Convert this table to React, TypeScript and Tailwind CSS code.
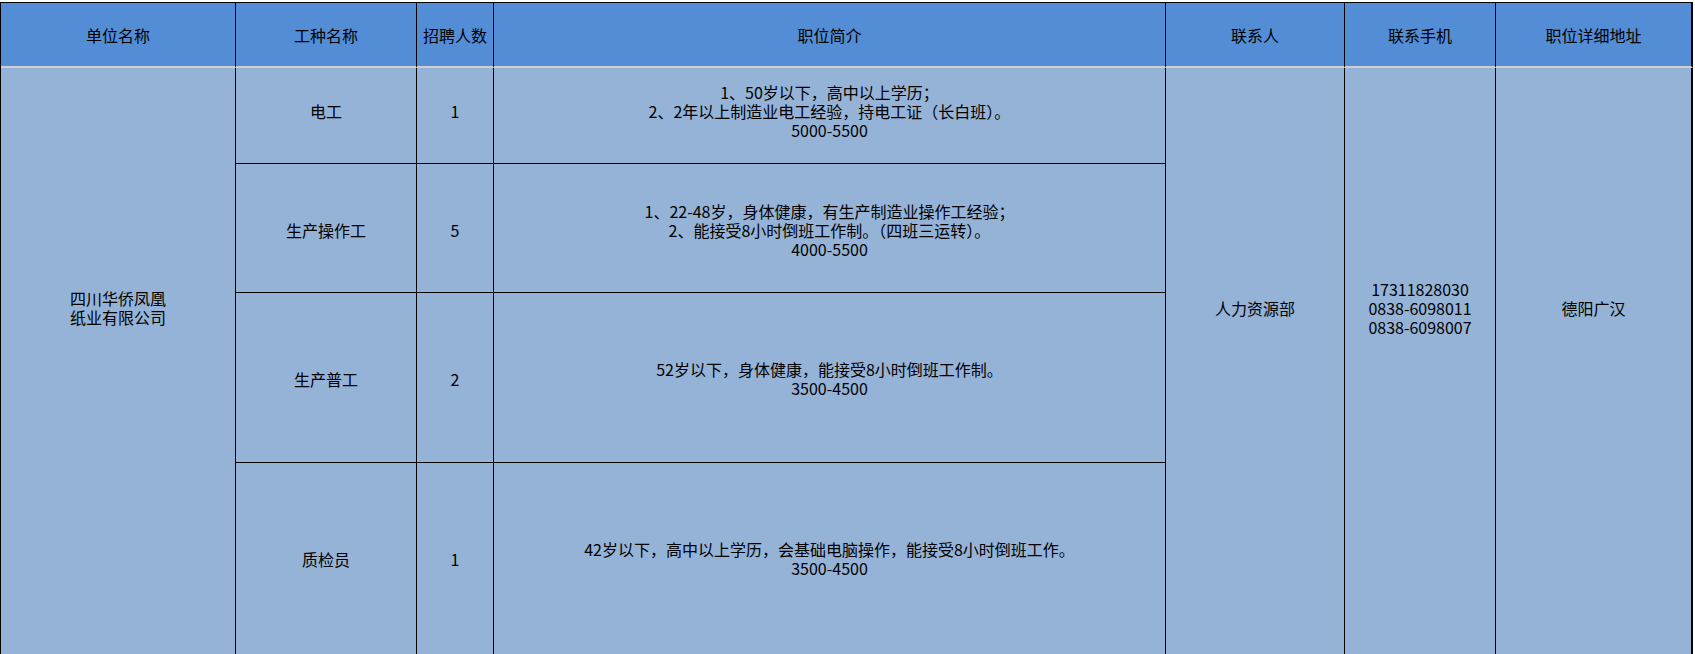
import React from 'react';

type Job = {
	name: string;
	count: string;
	desc: string[];
	row: string;
	shift: string;
};

const jobs: Job[] = [
	{
		name: '电工',
		count: '1',
		desc: ['1、50岁以下，高中以上学历；', '2、2年以上制造业电工经验，持电工证（长白班）。', '5000-5500'],
		row: 'row-start-2',
		shift: 'pb-[9px]',
	},
	{
		name: '生产操作工',
		count: '5',
		desc: ['1、22-48岁，身体健康，有生产制造业操作工经验；', '2、能接受8小时倒班工作制。（四班三运转）。', '4000-5500'],
		row: 'row-start-3',
		shift: 'pt-[4px]',
	},
	{
		name: '生产普工',
		count: '2',
		desc: ['52岁以下，身体健康，能接受8小时倒班工作制。', '3500-4500'],
		row: 'row-start-4',
		shift: 'pt-[3px]',
	},
	{
		name: '质检员',
		count: '1',
		desc: ['42岁以下，高中以上学历，会基础电脑操作，能接受8小时倒班工作。', '3500-4500'],
		row: 'row-start-5',
		shift: '',
	},
];

const headers = ['单位名称', '工种名称', '招聘人数', '职位简介', '联系人', '联系手机', '职位详细地址'];

const cell = 'flex items-center justify-center text-center border-r border-b border-black bg-[#95b3d7]';
const merged = `${cell} row-start-2 row-span-4 pb-[107px]`;

export default function App() {
	return (
		<div
			className="w-[1695px] h-[654px] overflow-hidden bg-white pt-[2px] text-black text-[16px] leading-[19px]"
			style={{ fontFamily: '"Noto Sans CJK SC", "Noto Sans", sans-serif' }}
		>
			<div className="grid grid-cols-[235px_181px_77px_672px_179px_151px_197px] grid-rows-[65px_96px_129px_170px_193px] w-[1693px] border-l border-t border-black">
				{headers.map((h, i) => (
					<div
						key={h}
						className={`flex items-center justify-center pt-[2px] bg-[#538dd5] border-b-2 border-b-[#d0d0d0] border-r-black ${
							i === headers.length - 1 ? 'border-r-2' : 'border-r'
						}`}
					>
						{h}
					</div>
				))}

				<div className={`${merged} col-start-1`}>
					<div>
						<div>四川华侨凤凰</div>
						<div>纸业有限公司</div>
					</div>
				</div>

				{jobs.map((j) => (
					<React.Fragment key={j.name}>
						<div className={`${cell} ${j.row} ${j.shift} col-start-2`}>{j.name}</div>
						<div className={`${cell} ${j.row} ${j.shift} col-start-3`}>{j.count}</div>
						<div className={`${cell} ${j.row} ${j.shift} col-start-4`}>
							<div>
								{j.desc.map((line) => (
									<div key={line}>{line}</div>
								))}
							</div>
						</div>
					</React.Fragment>
				))}

				<div className={`${merged} col-start-5`}>人力资源部</div>
				<div className={`${merged} col-start-6`}>
					<div>
						<div>17311828030</div>
						<div>0838-6098011</div>
						<div>0838-6098007</div>
					</div>
				</div>
				<div className={`${merged} col-start-7 border-r-2`}>德阳广汉</div>
			</div>
		</div>
	);
}
